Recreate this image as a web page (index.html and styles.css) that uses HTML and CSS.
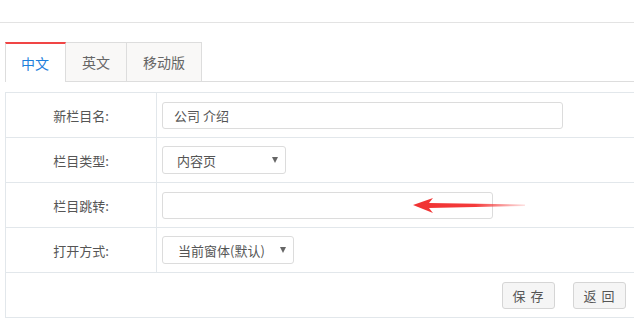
FILE: index.html
```html
<!DOCTYPE html>
<html>
<head>
  <title>栏目设置</title>
  <link rel="stylesheet" href="styles.css">
</head>
<body>

  <div class="topbar"></div>

  <div class="tabs">
    <div class="tab active">中文</div>
    <div class="tab">英文</div>
    <div class="tab">移动版</div>
  </div>

  <div class="panel">
    <table class="form-table">
      <colgroup>
        <col class="label-col">
        <col>
      </colgroup>
      <tr>
        <td class="label">新栏目名:</td>
        <td><input type="text" class="text-input name-input" value="公司 介绍"></td>
      </tr>
      <tr>
        <td class="label">栏目类型:</td>
        <td>
          <div class="select type-select">
            <span>内容页</span>
            <span class="caret"></span>
          </div>
        </td>
      </tr>
      <tr>
        <td class="label">栏目跳转:</td>
        <td class="jump-cell">
          <input type="text" class="text-input jump-input">
          <!-- red pointer arrow -->
          <svg class="arrow" width="112" height="16" viewBox="0 0 112 16">
            <defs>
              <linearGradient id="fade" x1="0" x2="1" y1="0" y2="0">
                <stop offset="0" stop-color="#f03333"/>
                <stop offset="0.55" stop-color="#f43a3a"/>
                <stop offset="1" stop-color="#f43a3a" stop-opacity="0.15"/>
              </linearGradient>
            </defs>
            <polygon points="0,7 20,0 16,5 112,6.5 112,8 16,10 20,15" fill="url(#fade)"/>
          </svg>
        </td>
      </tr>
      <tr>
        <td class="label">打开方式:</td>
        <td>
          <div class="select open-select">
            <span>当前窗体(默认)</span>
            <span class="caret"></span>
          </div>
        </td>
      </tr>
      <tr>
        <td class="actions" colspan="2">
          <button class="btn">保 存</button>
          <button class="btn">返 回</button>
        </td>
      </tr>
    </table>
  </div>

</body>
</html>
```

FILE: styles.css
```css
body {
  margin: 0;
  font-family: "Noto Sans CJK SC", "Liberation Sans", sans-serif;
  font-size: 13px;
  color: #555;
  background: #fff;
  overflow: hidden;
}

.topbar {
  height: 22px;
  border-bottom: 1px solid #e3e3e3;
}

.tabs {
  display: flex;
  margin: 19px 0 0 5px;
  border-bottom: 1px solid #ddd;
}

.tab {
  height: 38px;
  line-height: 38px;
  padding: 0 16px;
  border: 1px solid #ddd;
  border-left: none;
  border-bottom: none;
  background: #f9f8f7;
  font-size: 14px;
  color: #666;
}

.tab:first-child {
  border-left: 1px solid #ddd;
}

.tab.active {
  background: #fff;
  color: #1e7fdc;
  border-top: 2px solid #f04545;
  height: 38px;
  line-height: 38px;
  padding: 0 16px 0 15px;
  margin-bottom: -1px;
}

.panel {
  margin: 10px 0 0 5px;
}

.form-table {
  width: 640px;
  border-collapse: collapse;
  table-layout: fixed;
}

.label-col {
  width: 151px;
}

.form-table td {
  border: 1px solid #e2e7eb;
  height: 44px;
  padding: 0 6px 0 5px;
}

.form-table td.label {
  text-align: center;
  padding: 0;
  color: #555;
}

.text-input {
  box-sizing: border-box;
  height: 27px;
  border: 1px solid #dcdcdc;
  border-radius: 3px;
  padding: 0 11px;
  font-family: inherit;
  font-size: 13px;
  color: #555;
  outline: none;
  display: block;
}

.name-input {
  width: 401px;
}

.jump-input {
  width: 331px;
}

.jump-cell {
  position: relative;
}

.arrow {
  position: absolute;
  left: 256px;
  top: 15px;
}

.select {
  box-sizing: border-box;
  height: 28px;
  border: 1px solid #dcdcdc;
  border-radius: 3px;
  display: flex;
  align-items: center;
  justify-content: space-between;
  padding: 0 7px 0 14px;
  color: #555;
}

.type-select {
  width: 124px;
}

.open-select {
  width: 132px;
  padding-left: 15px;
}

.caret {
  width: 0;
  height: 0;
  border-left: 3px solid transparent;
  border-right: 3px solid transparent;
  border-top: 6px solid #666;
}

.actions {
  text-align: right;
  padding-right: 18px !important;
}

.btn {
  width: 53px;
  height: 27px;
  margin-left: 15px;
  background: #f5f5f5;
  border: 1px solid #d5d5d5;
  border-radius: 3px;
  font-family: inherit;
  font-size: 13px;
  letter-spacing: 1px;
  color: #555;
  cursor: pointer;
}
```
